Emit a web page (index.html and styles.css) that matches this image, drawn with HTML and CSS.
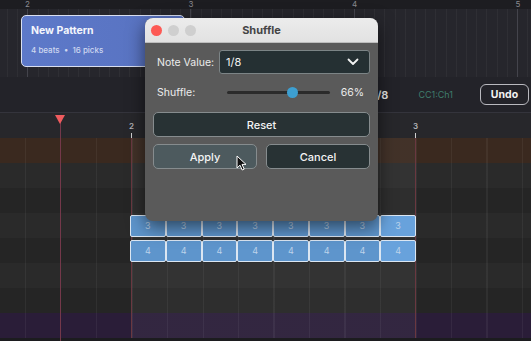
FILE: index.html
```html
<!DOCTYPE html>
<html lang="en">

<head>
  <meta charset="UTF-8">
  <title>Shuffle</title>
  <link rel="stylesheet" href="styles.css">
</head>

<body>
  <div class="app">
    <!-- 顶部小节标尺 -->
    <div class="ruler">
      <span class="bar-num">2</span>
      <span class="bar-num">3</span>
      <span class="bar-num">4</span>
      <span class="bar-num">5</span>
    </div>

    <div class="pattern-lane">
      <div class="pattern">
        <div class="pattern-name">New Pattern</div>
        <div class="pattern-info">4 beats &nbsp;•&nbsp; 16 picks</div>
      </div>
    </div>

    <div class="toolbar">
      <span class="value">1/8</span>
      <span class="cc">CC1:Ch1</span>
      <button class="undo">Undo</button>
    </div>

    <div class="editor">
      <div class="editor-ruler">
        <span class="beat-num">2</span>
        <span class="beat-num">3</span>
      </div>
      <div class="rows">
        <div class="row orange"></div>
        <div class="row"></div>
        <div class="row alt"></div>
        <div class="row">
          <div class="notes">
            <span class="note">3</span><span class="note">3</span><span class="note">3</span><span class="note">3</span>
            <span class="note">3</span><span class="note">3</span><span class="note">3</span><span class="note">3</span>
          </div>
        </div>
        <div class="row alt">
          <div class="notes">
            <span class="note">4</span><span class="note">4</span><span class="note">4</span><span class="note">4</span>
            <span class="note">4</span><span class="note">4</span><span class="note">4</span><span class="note">4</span>
          </div>
        </div>
        <div class="row"></div>
        <div class="row alt"></div>
        <div class="row purple"></div>
      </div>
      <div class="playhead"></div>
    </div>

    <!-- Shuffle 对话框 -->
    <div class="dialog">
      <div class="titlebar">
        <div class="lights">
          <span class="light red"></span>
          <span class="light"></span>
          <span class="light"></span>
        </div>
        <span class="title">Shuffle</span>
      </div>
      <div class="dialog-body">
        <div class="field">
          <label class="label">Note Value:</label>
          <div class="select">
            <span>1/8</span>
            <svg width="12" height="8" viewBox="0 0 12 8">
              <path d="M1.5 1.5 L6 6 L10.5 1.5" fill="none" stroke="#f2f2f2" stroke-width="1.8" stroke-linecap="round" stroke-linejoin="round" />
            </svg>
          </div>
        </div>
        <div class="field shuffle">
          <label class="label">Shuffle:</label>
          <div class="slider">
            <span class="thumb"></span>
          </div>
          <span class="percent">66%</span>
        </div>
        <button class="btn wide">Reset</button>
        <div class="btn-row">
          <button class="btn hover">Apply</button>
          <button class="btn">Cancel</button>
        </div>
      </div>
    </div>

    <svg class="cursor" width="12" height="17" viewBox="0 0 12 17">
      <path d="M1 1 L1 13 L4 10.2 L6.2 15 L8.2 14.1 L6 9.4 L10 9.4 Z" fill="#111" stroke="#fff" stroke-width="1" stroke-linejoin="round" />
    </svg>
  </div>
</body>

</html>
```

FILE: styles.css
```css
html,
body {
  margin: 0;
  padding: 0;
  width: 100%;
  height: 100%;
  background-color: #1c1c1f;
}

.app {
  position: relative;
  width: 531px;
  height: 341px;
  overflow: hidden;
  font-family: Inter, "Liberation Sans", sans-serif;
  color: #fff;
}

/* 顶部标尺 */
.ruler {
  display: flex;
  height: 9px;
  padding-left: 25px;
  background-color: #1d1d21;
}

.bar-num {
  flex: none;
  width: 163.5px;
  font-size: 8px;
  line-height: 9px;
  color: #8a8a90;
}

.pattern-lane {
  height: 68px;
  padding: 6px 0 0 21px;
  box-sizing: border-box;
  background-color: #26262c;
  background-image:
    repeating-linear-gradient(90deg, transparent 0 27px, #44444c 27px 28px, transparent 28px 163.5px),
    repeating-linear-gradient(90deg, transparent 0 7px, rgba(255, 255, 255, .04) 7px 8px, transparent 8px 10.2px);
}

.pattern {
  width: 164px;
  height: 52px;
  box-sizing: border-box;
  padding: 8px 9px;
  border: 1.5px solid #d9dff0;
  border-radius: 5px;
  background: linear-gradient(90deg, #5d79c9, #5872c0);
}

.pattern-name {
  font-size: 10.5px;
  font-weight: 700;
  color: #f4f6fc;
}

.pattern-info {
  margin-top: 8px;
  font-size: 8px;
  font-weight: 500;
  color: #cfd8f0;
}

/* 工具栏 */
.toolbar {
  display: flex;
  align-items: center;
  justify-content: flex-end;
  height: 35px;
  padding-right: 2px;
  border-bottom: 1px solid #34343c;
  background-color: #232329;
}

.value {
  font-size: 11px;
  font-weight: 600;
  color: #e8e8e8;
}

.cc {
  margin-left: 30px;
  font-size: 9px;
  color: #3f7d6c;
}

.undo {
  margin-left: 27px;
  width: 49px;
  height: 21px;
  padding: 0;
  border: 1.5px solid #b9b9bf;
  border-radius: 6px;
  background: transparent;
  font-family: inherit;
  font-size: 10.5px;
  font-weight: 700;
  color: #f2f2f2;
}

/* 钢琴卷帘 */
.editor {
  position: relative;
}

.editor-ruler {
  display: flex;
  height: 25px;
  padding-left: 129px;
  background-color: #27272b;
}

.beat-num {
  flex: none;
  width: 284px;
  padding-top: 8px;
  font-size: 8px;
  font-weight: 600;
  color: #b4b4b8;
  position: relative;
}

.beat-num::after {
  content: "";
  position: absolute;
  left: 2px;
  top: 20px;
  width: 1px;
  height: 5px;
  background-color: #d0d0d0;
}

.rows {
  height: 203px;
  border-bottom: 3px solid #19191b;
}

.row {
  height: 25px;
  background-color: #2a2a2a;
  background-image:
    linear-gradient(90deg, transparent 131px, #6a3840 131px 132px, transparent 132px 415px, #6a3840 415px 416px, transparent 416px),
    repeating-linear-gradient(90deg, transparent 0 25px, rgba(255, 255, 255, .05) 25px 26px, transparent 26px 35.5px),
    linear-gradient(90deg, transparent 132px, rgba(255, 255, 255, .045) 132px 415px, transparent 415px);
}

.row.alt {
  background-color: #252525;
}

.row.orange {
  background-color: #3a291f;
}

.row.purple {
  background-color: #2a1d38;
}

.notes {
  display: flex;
  width: 286px;
  margin-left: 130px;
  padding-top: 2px;
}

.note {
  flex: 1;
  height: 22px;
  box-sizing: border-box;
  border: 1px solid #dbe6f2;
  border-radius: 2px;
  background-color: #5e95cc;
  font-size: 9px;
  line-height: 20px;
  text-align: center;
  color: #bcd2ea;
}

.note:last-child {
  background-color: #68a2dc;
}

.playhead {
  position: absolute;
  left: 60px;
  top: 2px;
  bottom: 3px;
  width: 1px;
  background-color: #74384a;
}

.playhead::before {
  content: "";
  position: absolute;
  left: -5px;
  top: 0;
  border-left: 5.5px solid transparent;
  border-right: 5.5px solid transparent;
  border-top: 9px solid #ef5b5e;
}

/* 对话框 */
.dialog {
  position: absolute;
  left: 145px;
  top: 18px;
  width: 233px;
  height: 203px;
  border-radius: 8px;
  overflow: hidden;
  background-color: #5a5a5a;
  box-shadow: 0 6px 18px rgba(0, 0, 0, .55);
}

.titlebar {
  position: relative;
  height: 24px;
  display: flex;
  align-items: center;
  justify-content: center;
  background: linear-gradient(#ececec, #e2e2e2);
  border-bottom: 1px solid #bdbdbd;
}

.lights {
  position: absolute;
  left: 6px;
  top: 7px;
  display: flex;
  gap: 6px;
}

.light {
  width: 11px;
  height: 11px;
  border-radius: 50%;
  background-color: #cfcfcf;
}

.light.red {
  background-color: #fd5a55;
}

.title {
  font-size: 11px;
  font-weight: 700;
  color: #454545;
}

.dialog-body {
  display: flex;
  flex-direction: column;
  padding: 7px 8px 0;
}

.field {
  display: flex;
  align-items: center;
  height: 24px;
}

.label {
  width: 62px;
  padding-left: 4px;
  font-size: 10.5px;
  color: #ececec;
}

.select {
  flex: 1;
  display: flex;
  align-items: center;
  justify-content: space-between;
  height: 24px;
  box-sizing: border-box;
  padding: 0 10px 0 6px;
  border: 1px solid #7c8486;
  border-radius: 3px;
  background-color: #253033;
  font-size: 11px;
  color: #f2f2f2;
}

.field.shuffle {
  margin-top: 7px;
  height: 22px;
}

.slider {
  position: relative;
  width: 103px;
  height: 3px;
  margin-left: 8px;
  border-radius: 2px;
  background-color: #2b2b2b;
}

.thumb {
  position: absolute;
  left: 60px;
  top: -4px;
  width: 11px;
  height: 11px;
  border-radius: 50%;
  background-color: #3d9fd1;
}

.percent {
  margin-left: auto;
  margin-right: 6px;
  font-size: 10.5px;
  color: #ececec;
}

.btn {
  height: 25px;
  box-sizing: border-box;
  padding: 0;
  border: 1px solid #868c8e;
  border-radius: 5px;
  background-color: #283234;
  font-family: inherit;
  font-size: 11px;
  font-weight: 500;
  color: #f4f4f4;
}

.btn.wide {
  margin-top: 9px;
}

.btn.hover {
  background-color: #4d5a5e;
}

.btn-row {
  display: grid;
  grid-template-columns: 1fr 1fr;
  gap: 9px;
  margin-top: 7px;
}

.cursor {
  position: absolute;
  left: 236px;
  top: 155px;
}
```
